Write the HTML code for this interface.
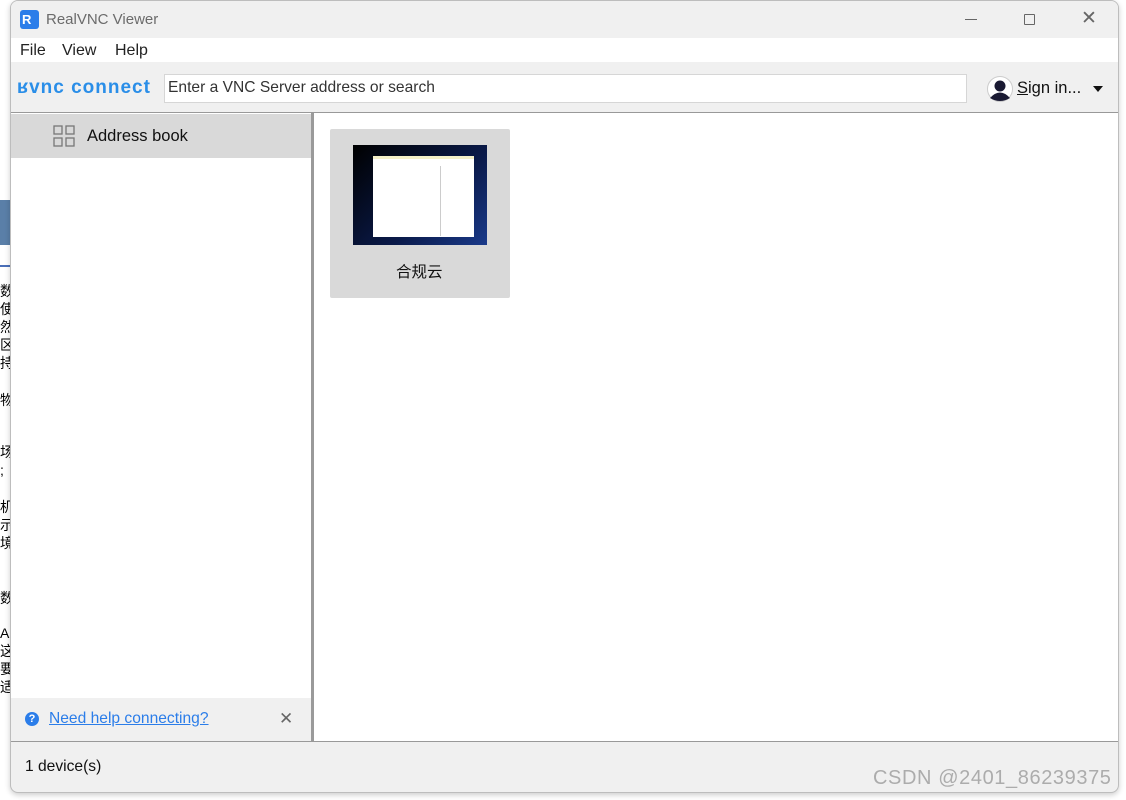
<!DOCTYPE html>
<html><head><meta charset="utf-8"><style>
*{box-sizing:border-box;margin:0;padding:0}
body{width:1126px;height:800px;background:#fff;position:relative;overflow:hidden;font-family:"Segoe UI","Liberation Sans","Noto Sans CJK SC",sans-serif;}
.abs{position:absolute}
.win{left:10px;top:0;width:1109px;height:793px;background:#f0f0f0;border:1px solid #bdbdbd;border-radius:8px;overflow:hidden;box-shadow:0 2px 6px rgba(0,0,0,.2)}
.side{position:absolute;font-size:15px;color:#000;left:0}
</style></head><body>
<div class="side" style="top:282px;line-height:18px;font-size:14px">数<br>使<br>然<br>区<br>持</div>
<div class="side" style="top:390px;font-size:14px">物</div>
<div class="side" style="top:443px;line-height:18px;font-size:14px">场<br>; ‥</div>
<div class="side" style="top:498px;line-height:18px;font-size:14px">机<br>示<br>境</div>
<div class="side" style="top:588px;font-size:14px">数</div>
<div class="side" style="top:624px;line-height:18px;font-size:14px">AI<br>这<br>要<br>适</div>
<div class="abs" style="left:0;top:200px;width:10px;height:45px;background:#5a7fa8"></div>
<div class="abs" style="left:0;top:265px;width:10px;height:2px;background:#4a6fb8"></div>
<div class="win abs">
 <div class="abs" style="left:0;top:0;width:1109px;height:37px;background:#f0f0f0"></div>
 <div class="abs" style="left:9px;top:9px;width:19px;height:19px;background:#2b7de9;border-radius:3px;color:#fff;font-weight:bold;font-size:13px;line-height:19px;padding-left:2px">R</div>
 <div class="abs" style="left:35px;top:10px;font-size:15px;color:#6b6b6b">RealVNC Viewer</div>
 <div class="abs" style="left:954px;top:18px;width:12px;height:1px;background:#666"></div>
 <div class="abs" style="left:1013px;top:13px;width:11px;height:11px;border:1px solid #666;border-radius:1px"></div>
 <div class="abs" style="left:1070px;top:8px;font-size:19px;color:#666;line-height:20px">✕</div>
 <div class="abs" style="left:0;top:37px;width:1109px;height:24px;background:#fff"></div>
 <div class="abs" style="left:9px;top:41px;font-size:16px;color:#222">File</div>
 <div class="abs" style="left:51px;top:41px;font-size:16px;color:#222">View</div>
 <div class="abs" style="left:104px;top:41px;font-size:16px;color:#222">Help</div>
 <div class="abs" style="left:6px;top:76px;font-size:19px;font-weight:bold;color:#2a8ee8;letter-spacing:1px">ʁvnc connect</div>
 <div class="abs" style="left:153px;top:73px;width:803px;height:29px;background:#fff;border:1px solid #d6d6d6;font-size:15.6px;color:#333;padding:4px 0 0 3px">Enter a VNC Server address or search</div>
 <svg class="abs" style="left:976px;top:75px" width="26" height="26" viewBox="0 0 26 26"><circle cx="13" cy="13" r="12.5" fill="#fff" stroke="#ccc"/><circle cx="13" cy="10" r="5.5" fill="#1a1a33"/><path d="M3 22 Q13 11 23 22 Q13 28 3 22Z" fill="#1a1a33"/></svg>
 <div class="abs" style="left:1006px;top:78px;font-size:16.5px;color:#111"><u>S</u>ign in...</div>
 <div class="abs" style="left:1082px;top:85px;width:0;height:0;border-left:5px solid transparent;border-right:5px solid transparent;border-top:6px solid #111"></div>
 <div class="abs" style="left:0;top:111px;width:1109px;height:1px;background:#999"></div>
 <div class="abs" style="left:0;top:112px;width:300px;height:628px;background:#fff"></div>
 <div class="abs" style="left:0;top:113px;width:300px;height:44px;background:#d9d9d9"></div>
 <svg class="abs" style="left:42px;top:124px" width="23" height="23" viewBox="0 0 23 23" fill="none" stroke="#777" stroke-width="1.3"><rect x="1" y="1" width="8" height="8"/><rect x="13" y="1" width="8" height="8"/><rect x="1" y="13" width="8" height="8"/><rect x="13" y="13" width="8" height="8"/></svg>
 <div class="abs" style="left:76px;top:126px;font-size:16.5px;color:#111">Address book</div>
 <div class="abs" style="left:0;top:697px;width:300px;height:43px;background:#f0f0f0"></div>
 <div class="abs" style="left:14px;top:711px;width:14px;height:14px;border-radius:50%;background:#2b7de9;color:#fff;font-size:11px;font-weight:bold;text-align:center;line-height:14px">?</div>
 <div class="abs" style="left:38px;top:709px;font-size:15.6px;color:#2b7de9;text-decoration:underline">Need help connecting?</div>
 <div class="abs" style="left:268px;top:708px;font-size:17px;color:#666">✕</div>
 <div class="abs" style="left:300px;top:112px;width:3px;height:629px;background:#9a9a9a"></div>
 <div class="abs" style="left:303px;top:112px;width:805px;height:629px;background:#fff"></div>
 <div class="abs" style="left:319px;top:128px;width:180px;height:169px;background:#d9d9d9;border-radius:2px"></div>
 <div class="abs" style="left:342px;top:144px;width:134px;height:100px;background:linear-gradient(135deg,#000 0%,#0a1a4a 60%,#1a3a8a 100%)"></div>
 <div class="abs" style="left:362px;top:155px;width:101px;height:81px;background:#fff;border-top:3px solid #f4f0c8"></div>
 <div class="abs" style="left:429px;top:165px;width:1px;height:70px;background:#ccc"></div>
 <div class="abs" style="left:385px;top:259px;font-size:15.5px;color:#111">合规云</div>
 <div class="abs" style="left:0;top:740px;width:1109px;height:1px;background:#999"></div>
 <div class="abs" style="left:14px;top:757px;font-size:15.6px;color:#111">1 device(s)</div>
</div>
<div class="abs" style="left:873px;top:767px;font-size:20px;letter-spacing:0.6px;color:rgba(150,150,150,.75)">CSDN @2401_86239375</div>
</body></html>
